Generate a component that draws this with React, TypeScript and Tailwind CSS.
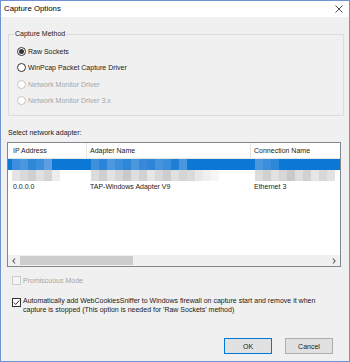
import React from 'react'

const font = { fontFamily: '"Liberation Sans", Arial, sans-serif' }

const Radio = ({ label, checked, disabled }: { label: string; checked?: boolean; disabled?: boolean }) => (
  <div className="flex h-[16.5px] items-center pl-[8px]">
    <span
      className={`flex h-[9px] w-[9px] items-center justify-center rounded-full border bg-white ${
        disabled ? 'border-[#c4c4c4] bg-[#f4f4f4]' : 'border-[#333333]'
      }`}
    >
      {checked && <span className="h-[5px] w-[5px] rounded-full bg-[#333333]" />}
    </span>
    <span className={`ml-[2px] ${disabled ? 'text-[#a6a6a6]' : 'text-[#1a1a1a]'}`}>{label}</span>
  </div>
)

const Checkbox = ({ checked, disabled }: { checked?: boolean; disabled?: boolean }) => (
  <span
    className={`flex h-[9px] w-[9px] shrink-0 items-center justify-center border ${
      disabled ? 'border-[#cccccc] bg-[#f4f4f4]' : 'border-[#333333] bg-white'
    }`}
  >
    {checked && (
      <svg width="7" height="7" viewBox="0 0 7 7">
        <path d="M0.8 3.6 L2.7 5.5 L6.3 1.4" stroke="#333" strokeWidth="1" fill="none" />
      </svg>
    )}
  </span>
)

// pixelated (blurred) cells
const Blocks = ({ colors, w }: { colors: string[]; w: number }) => (
  <div className="flex h-full">
    {colors.map((c, i) => (
      <div key={i} className="h-full" style={{ width: w, background: c }} />
    ))}
  </div>
)

export default function App() {
  return (
    <div style={font} className="flex h-[362px] w-[350px] flex-col border border-[#7091d2] bg-[#f0f0f0] text-[7px] leading-none text-[#1a1a1a]">
      {/* Title bar */}
      <div className="flex h-[16px] shrink-0 items-center justify-between bg-white pl-[3px] pr-[6px]">
        <span className="text-[7.8px] text-black">Capture Options</span>
        <svg width="8" height="8" viewBox="0 0 8 8">
          <path d="M0.5 0.5 L7.5 7.5 M7.5 0.5 L0.5 7.5" stroke="#333" strokeWidth="0.9" />
        </svg>
      </div>

      <div className="flex flex-1 flex-col">
        {/* Capture Method group */}
        <div className="relative ml-[7px] mt-[17px] h-[82px] w-[336px] border border-[#dcdcdc] pt-[8px]">
          <span className="absolute -top-[5px] left-[5px] bg-[#f0f0f0] px-[1px]">Capture Method</span>
          <Radio label="Raw Sockets" checked />
          <Radio label="WinPcap Packet Capture Driver" />
          <Radio label="Network Monitor Driver" disabled />
          <Radio label="Network Monitor Driver 3.x" disabled />
        </div>

        <div className="ml-[7px] mt-[10px] flex h-[12px] items-center">Select network adapter:</div>

        {/* Adapter list */}
        <div className="ml-[6px] mt-[4px] flex h-[125px] w-[334px] flex-col border border-[#82878f] bg-white">
          <div className="flex h-[16px] shrink-0 items-center border-b border-[#e5e5e5]">
            <div className="flex h-full w-[79px] items-center border-r border-[#e5e5e5] pl-[5px]">IP Address</div>
            <div className="flex h-full w-[164px] items-center border-r border-[#e5e5e5] pl-[3px]">Adapter Name</div>
            <div className="flex h-full flex-1 items-center pl-[3px]">Connection Name</div>
          </div>
          <div className="flex h-[11px] shrink-0 bg-[#0a78d4]">
            <div className="w-[79px] pl-[4px]">
              <Blocks w={8} colors={['#3c8fdc', '#4a97de', '#2f87d8', '#3a8edb', '#5b9fe0']} />
            </div>
            <div className="w-[164px] pl-[4px]">
              <Blocks w={8} colors={['#3f90dc', '#2a84d7', '#4b98de', '#3a8edb', '#2f87d8', '#4a97de', '#3889da', '#2c85d7', '#4593dd', '#3a8edb', '#1e7fd5', '#4a97de']} />
            </div>
            <div className="flex-1 pl-[4px]">
              <Blocks w={8} colors={['#4a97de', '#3a8edb', '#2f87d8']} />
            </div>
          </div>
          <div className="flex h-[11px] shrink-0">
            <div className="w-[79px] pl-[4px]">
              <Blocks w={8} colors={['#e4e4e4', '#d9d9d9', '#cfcfcf', '#e0e0e0', '#d4d4d4', '#ededed']} />
            </div>
            <div className="w-[164px] pl-[4px]">
              <Blocks w={8} colors={['#dcdcdc', '#cfcfcf', '#e2e2e2', '#d6d6d6', '#c9c9c9', '#dedede', '#d1d1d1', '#e6e6e6', '#d8d8d8', '#cdcdcd', '#e0e0e0', '#d5d5d5', '#dadada', '#e8e8e8', '#f0f0f0', '#f6f6f6']} />
            </div>
            <div className="flex-1 pl-[4px]">
              <Blocks w={8} colors={['#dcdcdc', '#cfcfcf', '#e2e2e2', '#d6d6d6', '#c9c9c9', '#dedede', '#d1d1d1', '#e6e6e6', '#d8d8d8', '#e2e2e2']} />
            </div>
          </div>
          <div className="flex h-[11px] shrink-0 items-center">
            <div className="w-[79px] pl-[5px]">0.0.0.0</div>
            <div className="w-[164px] pl-[3px]">TAP-Windows Adapter V9</div>
            <div className="flex-1 pl-[3px]">Ethernet 3</div>
          </div>
          <div className="flex-1" />
          {/* horizontal scrollbar */}
          <div className="flex h-[11px] shrink-0 items-center bg-[#f0f0f0]">
            <div className="flex w-[12px] justify-center">
              <svg width="4" height="6" viewBox="0 0 4 6">
                <path d="M3 0.5 L1 3 L3 5.5" stroke="#606060" strokeWidth="1.2" fill="none" />
              </svg>
            </div>
            <div className="h-[9px] w-[113px] bg-[#cdcdcd]" />
            <div className="flex-1" />
            <div className="flex w-[12px] justify-center">
              <svg width="4" height="6" viewBox="0 0 4 6">
                <path d="M1 0.5 L3 3 L1 5.5" stroke="#606060" strokeWidth="1.2" fill="none" />
              </svg>
            </div>
          </div>
        </div>

        <div className="ml-[11px] mt-[7px] flex h-[12px] items-center">
          <Checkbox disabled />
          <span className="ml-[2px] text-[#a6a6a6]">Promiscuous Mode</span>
        </div>

        <div className="ml-[11px] mt-[10px] flex items-start">
          <div className="pt-[2px]">
            <Checkbox checked />
          </div>
          <p className="ml-[2px] w-[300px] leading-[9px]">
            Automatically add WebCookiesSniffer to Windows firewall on capture start and remove it when capture is
            stopped (This option is needed for 'Raw Sockets' method)
          </p>
        </div>

        <div className="mb-[7px] mr-[16px] mt-auto flex justify-end gap-[13px]">
          <button className="h-[16px] w-[48px] border border-[#0078d7] bg-[#e1e1e1]">OK</button>
          <button className="h-[16px] w-[48px] border border-[#adadad] bg-[#e1e1e1]">Cancel</button>
        </div>
      </div>
    </div>
  )
}
